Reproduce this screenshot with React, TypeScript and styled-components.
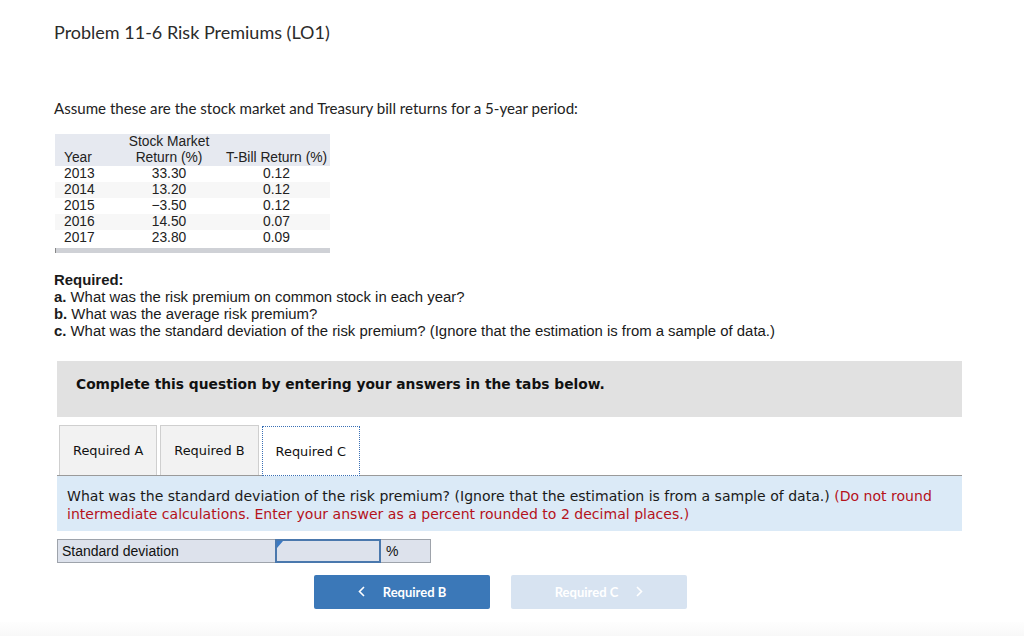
import React from "react";
import styled, { createGlobalStyle } from "styled-components";

const Global = createGlobalStyle`
  html, body { margin: 0; padding: 0; background: #ffffff; }
  body { width: 1024px; height: 636px; overflow: hidden; }
`;

const Page = styled.div`
  position: relative;
  width: 1024px;
  height: 636px;
  background: #fff;
  display: flex;
  flex-direction: column;
`;

const Content = styled.div`
  padding: 0 62px 0 54px;
  display: flex;
  flex-direction: column;
`;

const Title = styled.h1`
  margin: 21px 0 0 0;
  font-family: "Lato", "Open Sans", sans-serif;
  font-weight: 400;
  font-size: 18px;
  line-height: 22px;
  color: #2b2b2b;
`;

const Intro = styled.p`
  margin: 56px 0 0 0;
  font-family: "Lato", "Open Sans", sans-serif;
  font-size: 15.1px;
  line-height: 18px;
  color: #222;
`;

const TableWrap = styled.div`
  margin-top: 17px;
  margin-left: 1px;
  width: 275px;
  font-family: "Liberation Sans", Arial, sans-serif;
  font-size: 13.8px;
  color: #222;
`;

const Row = styled.div<{ $head?: boolean; $alt?: boolean }>`
  display: grid;
  grid-template-columns: 60px 108px 107px;
  background: ${(p) => (p.$head ? "#e6e9f0" : p.$alt ? "#f7f7f7" : "#ffffff")};
  line-height: 16px;
  align-items: end;
`;

const Cell = styled.div<{ $left?: boolean }>`
  text-align: ${(p) => (p.$left ? "left" : "center")};
  padding-left: ${(p) => (p.$left ? "9px" : "0")};
  white-space: nowrap;
`;

const TableFoot = styled.div`
  height: 5px;
  margin-top: 2px;
  background: #cfd1d6;
  border-left: 1px solid #888;
`;

const Required = styled.div`
  margin-top: 19px;
  font-family: "Liberation Sans", Arial, sans-serif;
  font-size: 14.9px;
  line-height: 16.9px;
  color: #1a1a1a;
`;

const ReqHead = styled.div`
  font-weight: 700;
`;

const Bold = styled.b`
  font-weight: 700;
`;

const Panel = styled.div`
  margin: 21px 0 0 3px;
  width: 905px;
  display: flex;
  flex-direction: column;
`;

const Instruction = styled.div`
  height: 56px;
  background: #e1e1e1;
  padding: 14px 0 0 19px;
  box-sizing: border-box;
  font-family: "DejaVu Sans", Verdana, sans-serif;
  font-weight: 700;
  font-size: 13.8px;
  line-height: 18px;
  color: #111;
`;

const Tabs = styled.div`
  margin-top: 8px;
  display: flex;
  align-items: flex-end;
  gap: 3px;
  padding-left: 2px;
  border-bottom: 1px solid #9a9a9a;
`;

const Tab = styled.div<{ $active?: boolean }>`
  height: 50px;
  box-sizing: border-box;
  padding: 1px 13px 0 13px;
  display: flex;
  align-items: center;
  font-family: "DejaVu Sans", Verdana, sans-serif;
  font-size: 12.9px;
  color: #111;
  background: ${(p) => (p.$active ? "#ffffff" : "#f2f2f2")};
  border: ${(p) => (p.$active ? "1px dotted #3a70b5" : "1px solid #cfcfcf")};
  border-bottom: ${(p) => (p.$active ? "1px dotted #3a70b5" : "none")};
  margin-bottom: ${(p) => (p.$active ? "-1px" : "0")};
  position: relative;
  z-index: 1;
`;

const Question = styled.div`
  background: #dbeaf7;
  height: 55px;
  box-sizing: border-box;
  padding: 11px 10px 0 10px;
  font-family: "DejaVu Sans", Verdana, sans-serif;
  font-size: 14.05px;
  line-height: 18px;
  color: #1a1a1a;
`;

const Red = styled.span`
  color: #b5121b;
`;

const AnswerRow = styled.div`
  margin-top: 8px;
  display: flex;
  height: 24px;
  font-family: "Liberation Sans", Arial, sans-serif;
  font-size: 14px;
  color: #111;
`;

const LabelCell = styled.div`
  width: 218px;
  box-sizing: border-box;
  background: #dde2ec;
  border: 1px solid #9ea3ab;
  border-right: none;
  padding-left: 4px;
  display: flex;
  align-items: center;
`;

const InputCell = styled.div`
  width: 106px;
  box-sizing: border-box;
  background: #dde2ec;
  border: 2px solid #4a78ad;
  position: relative;
`;

const Flag = styled.span`
  position: absolute;
  left: 0;
  top: 0;
  width: 0;
  height: 0;
  border-top: 7px solid #3a79c4;
  border-right: 6px solid transparent;
`;

const UnitCell = styled.div`
  width: 50px;
  box-sizing: border-box;
  background: #dde2ec;
  border: 1px solid #9ea3ab;
  border-left: none;
  padding-left: 5px;
  display: flex;
  align-items: center;
`;

const Nav = styled.div`
  margin-top: 12px;
  display: flex;
  gap: 21px;
  padding-left: 257px;
`;

const NavButton = styled.div<{ $disabled?: boolean }>`
  width: 176px;
  height: 34px;
  border-radius: 2px;
  background: ${(p) => (p.$disabled ? "#d7e3f1" : "#3b78b8")};
  color: #ffffff;
  display: flex;
  align-items: center;
  justify-content: center;
  gap: 18px;
  font-family: "Lato", "Open Sans", sans-serif;
  font-weight: 700;
  font-size: 13px;
`;

const Chevron = styled.svg`
  width: 7px;
  height: 11px;
`;

const BottomStrip = styled.div`
  margin-top: auto;
  height: 14px;
  background: linear-gradient(#fefefe, #f8f8f8);
`;

const data = [
  ["2013", "33.30", "0.12"],
  ["2014", "13.20", "0.12"],
  ["2015", "\u22123.50", "0.12"],
  ["2016", "14.50", "0.07"],
  ["2017", "23.80", "0.09"],
];

export default function App() {
  return (
    <Page>
      <Global />
      <Content>
        <Title>Problem 11-6 Risk Premiums (LO1)</Title>
        <Intro>Assume these are the stock market and Treasury bill returns for a 5-year period:</Intro>
        <TableWrap>
          <Row $head>
            <Cell $left>Year</Cell>
            <Cell>
              Stock Market
              <br />
              Return (%)
            </Cell>
            <Cell>T-Bill Return (%)</Cell>
          </Row>
          {data.map((r, i) => (
            <Row key={r[0]} $alt={i % 2 === 1}>
              <Cell $left>{r[0]}</Cell>
              <Cell>{r[1]}</Cell>
              <Cell>{r[2]}</Cell>
            </Row>
          ))}
          <TableFoot />
        </TableWrap>
        <Required>
          <ReqHead>Required:</ReqHead>
          <div>
            <Bold>a.</Bold> What was the risk premium on common stock in each year?
          </div>
          <div>
            <Bold>b.</Bold> What was the average risk premium?
          </div>
          <div>
            <Bold>c.</Bold> What was the standard deviation of the risk premium? (Ignore that the estimation is from a sample of data.)
          </div>
        </Required>
        <Panel>
          <Instruction>Complete this question by entering your answers in the tabs below.</Instruction>
          <Tabs>
            <Tab>Required A</Tab>
            <Tab>Required B</Tab>
            <Tab $active>Required C</Tab>
          </Tabs>
          <Question>
            What was the standard deviation of the risk premium? (Ignore that the estimation is from a sample of data.){" "}
            <Red>
              (Do not round intermediate calculations. Enter your answer as a percent rounded to 2 decimal places.)
            </Red>
          </Question>
          <AnswerRow>
            <LabelCell>Standard deviation</LabelCell>
            <InputCell>
              <Flag />
            </InputCell>
            <UnitCell>%</UnitCell>
          </AnswerRow>
          <Nav>
            <NavButton>
              <Chevron viewBox="0 0 7 11">
                <path d="M6 1 L1.5 5.5 L6 10" fill="none" stroke="#fff" strokeWidth="1.6" />
              </Chevron>
              <span>Required B</span>
            </NavButton>
            <NavButton $disabled>
              <span>Required C</span>
              <Chevron viewBox="0 0 7 11">
                <path d="M1 1 L5.5 5.5 L1 10" fill="none" stroke="#fff" strokeWidth="1.6" />
              </Chevron>
            </NavButton>
          </Nav>
        </Panel>
      </Content>
      <BottomStrip />
    </Page>
  );
}
